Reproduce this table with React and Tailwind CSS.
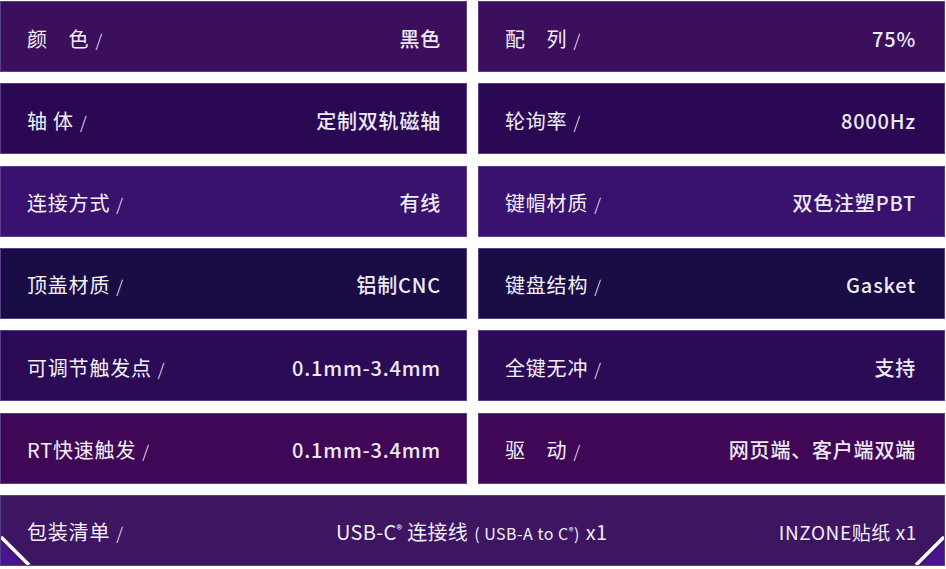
import React from 'react';

const font = { fontFamily: '"Noto Sans CJK SC", "Noto Sans", sans-serif' };

const rows = [
    { bg: 'bg-[#3b0f5c]', left: ['颜　色', '黑色'], right: ['配　列', '75%'] },
    { bg: 'bg-[#2a0853]', left: ['轴 体', '定制双轨磁轴'], right: ['轮询率', '8000Hz'] },
    { bg: 'bg-[#38126e]', left: ['连接方式', '有线'], right: ['键帽材质', '双色注塑PBT'] },
    { bg: 'bg-[#1a0c45]', left: ['顶盖材质', '铝制CNC'], right: ['键盘结构', 'Gasket'] },
    { bg: 'bg-[#2b0b55]', left: ['可调节触发点', '0.1mm-3.4mm'], right: ['全键无冲', '支持'] },
    { bg: 'bg-[#410757]', left: ['RT快速触发', '0.1mm-3.4mm'], right: ['驱　动', '网页端、客户端双端'] },
];

const Cell = ({ bg, label, value, right }) => (
    <div className={`${bg} h-[71px] border border-[#5a3d88] flex items-center justify-between pt-[4px] ${right ? 'pl-[26px] pr-[28px]' : 'pl-[26px] pr-[25px]'}`}>
        <span className="text-[20px] text-[#f3f1f7] tracking-[0.8px]">
            {label}<span className="ml-[6px] font-light text-[17px]">/</span>
        </span>
        <span className="text-[20px] font-medium text-[#eceaf2] tracking-[0.8px]">{value}</span>
    </div>
);

const App = () => {
    return (
        <div className="w-[946px] h-[569px] bg-white pt-[1px] pr-[1px] overflow-hidden" style={font}>
            <div className="grid grid-cols-2 gap-x-[11px] gap-y-[11.33px]">
                {rows.map((r, i) => (
                    <React.Fragment key={i}>
                        <Cell bg={r.bg} label={r.left[0]} value={r.left[1]} />
                        <Cell bg={r.bg} label={r.right[0]} value={r.right[1]} right />
                    </React.Fragment>
                ))}
                <div className="col-span-2 relative h-[71px] bg-[#3d1561] border border-[#5a3d88] flex items-center pt-[4px] pl-[26px] pr-[27px] overflow-hidden">
                    <span className="text-[20px] text-[#f3f1f7] tracking-[0.8px] w-[309px]">
                        包装清单<span className="ml-[6px] font-light text-[17px]">/</span>
                    </span>
                    <span className="text-[20px] text-[#f0eef5] tracking-[0.3px]">
                        USB-C<sup className="text-[12px]">®</sup> 连接线
                        <span className="text-[16px] ml-[6px] tracking-[0.5px]">( USB-A to C<sup className="text-[10px]">®</sup>)</span>
                        <span className="ml-[6px]">x1</span>
                    </span>
                    <span className="ml-auto text-[19px] text-[#f0eef5] tracking-[0.6px]">INZONE贴纸 x1</span>
                    <svg className="absolute left-0 bottom-0" width="34" height="30" viewBox="0 0 34 30">
                        <polygon points="0,7 0,30 23,30" fill="#4b148f" />
                        <line x1="0" y1="2" x2="28" y2="30" stroke="#ffffff" strokeWidth="3.5" />
                    </svg>
                    <svg className="absolute right-0 bottom-0" width="34" height="30" viewBox="0 0 34 30">
                        <polygon points="34,7 34,30 11,30" fill="#4b148f" />
                        <line x1="34" y1="2" x2="6" y2="30" stroke="#ffffff" strokeWidth="3.5" />
                    </svg>
                </div>
            </div>
        </div>
    );
};

export default App;
